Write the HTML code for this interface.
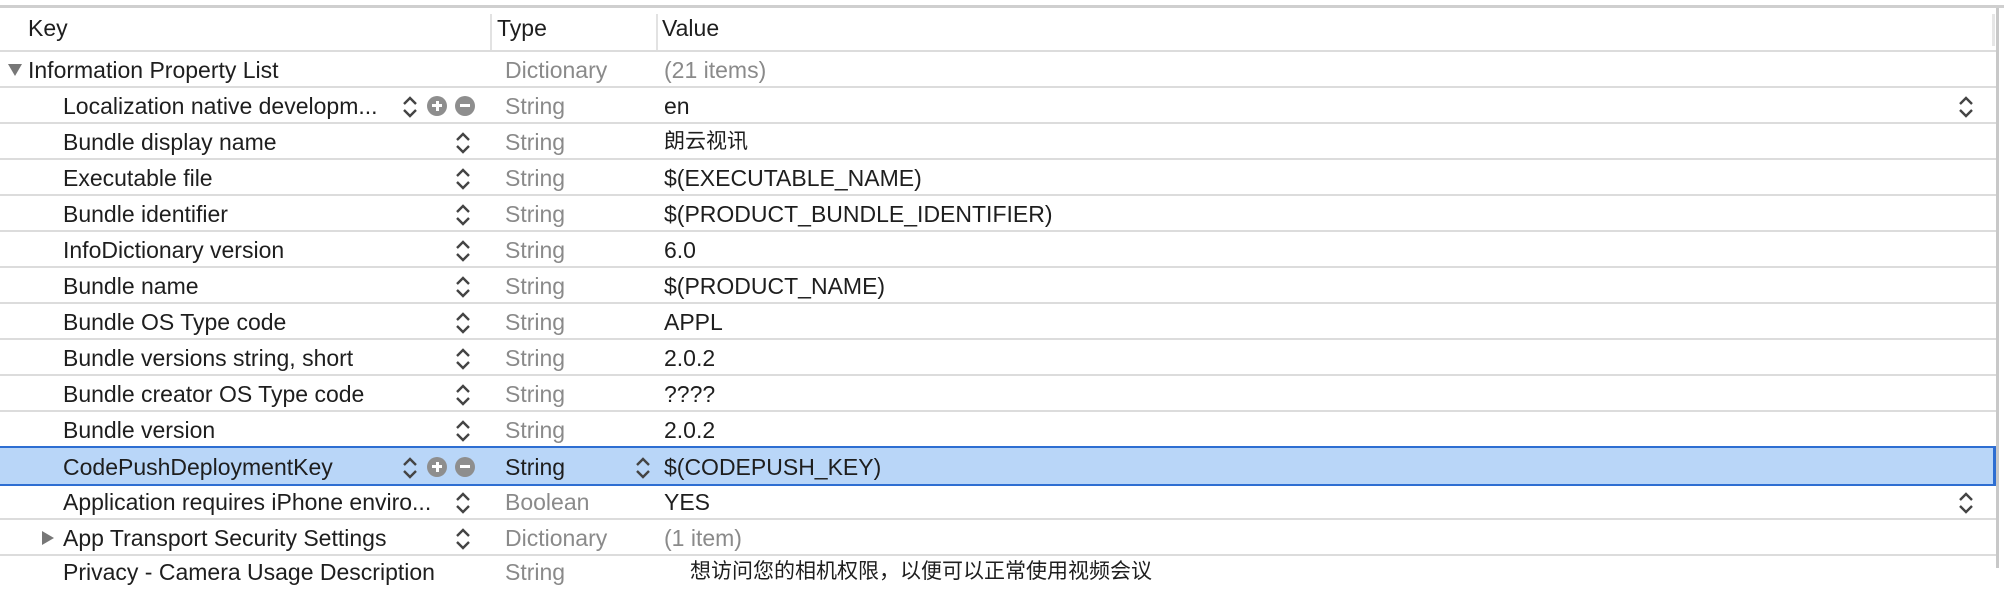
<!DOCTYPE html>
<html><head><meta charset="utf-8"><style>
*{margin:0;padding:0;box-sizing:border-box}
body{width:2004px;height:568px;overflow:hidden;background:#fff;font-family:"Liberation Sans","Noto Sans CJK SC",sans-serif;font-size:23px;color:#1e1e1e;position:relative}
.top{position:absolute;left:0;top:5px;width:2004px;height:3px;background:#cfcfcf}
.hdr{position:absolute;left:0;top:8px;width:1996px;height:44px;border-bottom:2px solid #dcdcdc}
.hdr span{position:absolute;top:7px}
.hsep{position:absolute;top:6px;width:2px;height:36px;background:#e2e2e2}
.row{position:absolute;left:0;width:1996px;height:36px;border-bottom:2px solid #dcdcdc}
.row span{position:absolute;top:5px;line-height:26px;white-space:nowrap}
.k{left:63px}.t{left:505px;color:#8a8a8a}.v{left:664px}
.g{color:#8a8a8a}
.sel{background:#b9d6f8;border-top:2px solid #2e6ed2;border-bottom:2px solid #2e6ed2;border-right:3px solid #2e6ed2}
.sel .t{color:#1e1e1e}
svg.st{position:absolute;top:8px}
.circ{position:absolute;top:8px;width:20px;height:20px;border-radius:50%;background:#8e8e8e}
.circ::after{content:"";position:absolute;left:5px;top:8px;width:10px;height:3px;background:#fff}
.plus::before{content:"";position:absolute;left:8.5px;top:5px;width:3px;height:10px;background:#fff}
.vs{position:absolute;left:1996px;top:8px;width:3px;height:560px;background:#c8c8c8}
.thumb{position:absolute;left:1992px;top:14px;width:3px;height:32px;background:#e6e6e6}
.cjk{font-size:21px}
</style></head><body>
<div class="top"></div>
<div class="hdr"><span style="left:28px">Key</span><div class="hsep" style="left:490px"></div><span style="left:497px">Type</span><div class="hsep" style="left:656px"></div><span style="left:662px">Value</span></div>

<svg width="0" height="0" style="position:absolute"><defs><g id="chev"><path d="M2 8 L8 2 L14 8 M2 14 L8 20 L14 14" fill="none" stroke="#444" stroke-width="2.4"/></g></defs></svg>

<div class="row" style="top:52px"><svg style="position:absolute;left:8px;top:12px" width="14" height="12"><path d="M0 0 H14 L7 12Z" fill="#777"/></svg><span style="left:28px">Information Property List</span><span class="t">Dictionary</span><span class="v g">(21 items)</span></div>
<div class="row" style="top:88px"><span class="k">Localization native developm...</span><svg class="st" style="left:402px" width="16" height="22"><use href="#chev"/></svg><div class="circ plus" style="left:427px"></div><div class="circ" style="left:455px"></div><span class="t">String</span><span class="v">en</span><svg class="st" style="left:1958px" width="16" height="22"><use href="#chev"/></svg></div>
<div class="row" style="top:124px"><span class="k">Bundle display name</span><svg class="st" style="left:455px" width="16" height="22"><use href="#chev"/></svg><span class="t">String</span><span class="v cjk">朗云视讯</span></div>
<div class="row" style="top:160px"><span class="k">Executable file</span><svg class="st" style="left:455px" width="16" height="22"><use href="#chev"/></svg><span class="t">String</span><span class="v">$(EXECUTABLE_NAME)</span></div>
<div class="row" style="top:196px"><span class="k">Bundle identifier</span><svg class="st" style="left:455px" width="16" height="22"><use href="#chev"/></svg><span class="t">String</span><span class="v">$(PRODUCT_BUNDLE_IDENTIFIER)</span></div>
<div class="row" style="top:232px"><span class="k">InfoDictionary version</span><svg class="st" style="left:455px" width="16" height="22"><use href="#chev"/></svg><span class="t">String</span><span class="v">6.0</span></div>
<div class="row" style="top:268px"><span class="k">Bundle name</span><svg class="st" style="left:455px" width="16" height="22"><use href="#chev"/></svg><span class="t">String</span><span class="v">$(PRODUCT_NAME)</span></div>
<div class="row" style="top:304px"><span class="k">Bundle OS Type code</span><svg class="st" style="left:455px" width="16" height="22"><use href="#chev"/></svg><span class="t">String</span><span class="v">APPL</span></div>
<div class="row" style="top:340px"><span class="k">Bundle versions string, short</span><svg class="st" style="left:455px" width="16" height="22"><use href="#chev"/></svg><span class="t">String</span><span class="v">2.0.2</span></div>
<div class="row" style="top:376px"><span class="k">Bundle creator OS Type code</span><svg class="st" style="left:455px" width="16" height="22"><use href="#chev"/></svg><span class="t">String</span><span class="v">????</span></div>
<div class="row" style="top:412px"><span class="k">Bundle version</span><svg class="st" style="left:455px" width="16" height="22"><use href="#chev"/></svg><span class="t">String</span><span class="v">2.0.2</span></div>
<div class="row sel" style="top:446px;height:40px"><span class="k" style="top:6px">CodePushDeploymentKey</span><svg class="st" style="left:402px;top:9px" width="16" height="22"><use href="#chev"/></svg><div class="circ plus" style="left:427px;top:9px"></div><div class="circ" style="left:455px;top:9px"></div><span class="t" style="top:6px">String</span><svg class="st" style="left:635px;top:9px" width="16" height="22"><use href="#chev"/></svg><span class="v" style="top:6px">$(CODEPUSH_KEY)</span></div>
<div class="row" style="top:484px"><span class="k">Application requires iPhone enviro...</span><svg class="st" style="left:455px" width="16" height="22"><use href="#chev"/></svg><span class="t">Boolean</span><span class="v">YES</span><svg class="st" style="left:1958px" width="16" height="22"><use href="#chev"/></svg></div>
<div class="row" style="top:520px"><svg style="position:absolute;left:42px;top:11px" width="12" height="14"><path d="M0 0 V14 L12 7Z" fill="#777"/></svg><span class="k">App Transport Security Settings</span><svg class="st" style="left:455px" width="16" height="22"><use href="#chev"/></svg><span class="t">Dictionary</span><span class="v g">(1 item)</span></div>
<div class="row" style="top:556px;border:none"><span class="k" style="top:3px">Privacy - Camera Usage Description</span><span class="t" style="top:3px">String</span><span class="v cjk" style="left:690px;top:3px">想访问您的相机权限，以便可以正常使用视频会议</span></div>
<div class="vs"></div><div class="thumb"></div>
</body></html>
